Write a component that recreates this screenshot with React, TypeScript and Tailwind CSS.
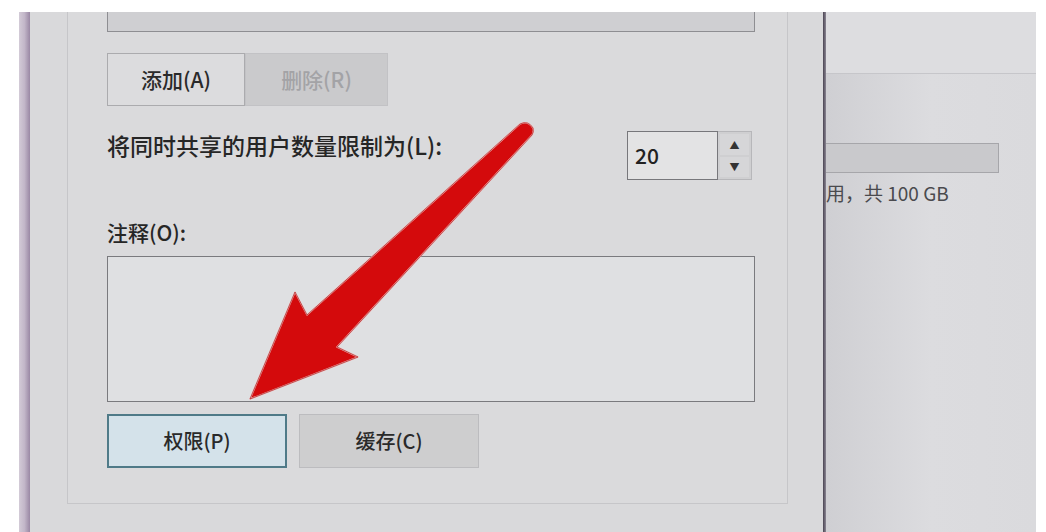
const cjk = { fontFamily: '"Noto Sans CJK SC", "Noto Sans", sans-serif' };

function Arrow() {
  return (
    <svg className="pointer-events-none absolute inset-0" width="1046" height="532" viewBox="0 0 1046 532">
      <path
        d="M520 124 Q528 120 533 128 Q534 132 532 135 L337 347 L358 357 L250 399 L295 292 L307 315 Z"
        fill="#d40a0c"
        stroke="#f4b6b6"
        strokeWidth="1.5"
        strokeLinejoin="round"
      />
      <path
        d="M520 124 Q528 120 533 128 Q534 132 532 135 L337 347 L358 357 L250 399 L295 292 L307 315 Z"
        fill="none"
        stroke="#9a0a0c"
        strokeWidth="0.6"
        strokeLinejoin="round"
      />
    </svg>
  );
}

export default function App() {
  return (
    <div className="relative h-[532px] w-[1046px] overflow-hidden bg-white pl-[19px] pr-[10px] pt-[12px]" style={cjk}>
      <div className="flex h-full">
        <div className="w-[11px] bg-gradient-to-r from-[#d3cbd7] via-[#c2b6c8] to-[#9a88a4]" />

        <div className="flex w-[793px] flex-col bg-[#d9d9db] pl-[37px] pr-[35px]">
          <div className="flex h-[492px] flex-col border-x border-b border-[#c6c6c9] bg-[#dadadc] pl-[39px] pr-[32px]">
            <div className="h-[20px] w-[648px] border-x border-b border-[#8e8e92] bg-[#cfcfd2]" />

            <div className="mt-[21px] flex h-[53px] text-[21px] font-medium">
              <button type="button" className="w-[138px] border border-[#ababae] bg-[#dcdcde] text-[#2a2a2a]">
                添加(A)
              </button>
              <button type="button" className="w-[143px] border border-[#c2c2c5] bg-[#cacacc] text-[#a3a3a6]">
                删除(R)
              </button>
            </div>

            <div className="mt-[25px] flex h-[49px] items-start justify-between">
              <p className="text-[23px] leading-[28px] font-medium text-[#262626]">将同时共享的用户数量限制为(L):</p>
              <div className="mr-[3px] flex h-[49px]">
                <div className="flex w-[91px] items-center border border-[#77777b] bg-[#e3e3e4] pl-[7px] text-[21px] font-medium text-[#222]">
                  20
                </div>
                <div className="flex w-[34px] flex-col gap-[2px] border-y border-r border-[#b7b7ba] bg-[#cfcfd1] p-[2px]">
                  <div className="flex flex-1 items-center justify-center bg-[#d6d6d8] text-[10px] text-[#333]">▲</div>
                  <div className="flex flex-1 items-center justify-center bg-[#d6d6d8] text-[10px] text-[#333]">▼</div>
                </div>
              </div>
            </div>

            <p className="mt-[39px] text-[21px] leading-[26px] font-medium text-[#262626]">注释(O):</p>

            <div className="mt-[11px] h-[146px] w-[648px] border border-[#7a7a7e] bg-[#dfe0e2]" />

            <div className="mt-[12px] flex h-[54px] gap-[12px] text-[20px] font-medium text-[#2a2a2a]">
              <button type="button" className="w-[180px] border-2 border-[#4f7a88] bg-[#d4e2ea]">
                权限(P)
              </button>
              <button type="button" className="w-[180px] border border-[#bcbcbf] bg-[#cececf]">
                缓存(C)
              </button>
            </div>
          </div>
        </div>

        <div className="w-[3px] bg-gradient-to-r from-[#4a4452] to-[#8c8794]" />

        <div className="flex flex-1 flex-col overflow-hidden bg-gradient-to-r from-[#cfcfd3] via-[#dcdcdf] to-[#dadadd]">
          <div className="h-[62px] border-b border-[#c6c6ca] bg-[#dddde0]" />
          <div className="mt-[69px] h-[30px] w-[173px] border-y border-r border-[#a6a6aa] bg-[#c9c9cc]" />
          <p className="mt-[8px] whitespace-nowrap text-[19px] leading-[24px] text-[#4a4a4e]">用，共 100 GB</p>
        </div>
      </div>

      <Arrow />
    </div>
  );
}
